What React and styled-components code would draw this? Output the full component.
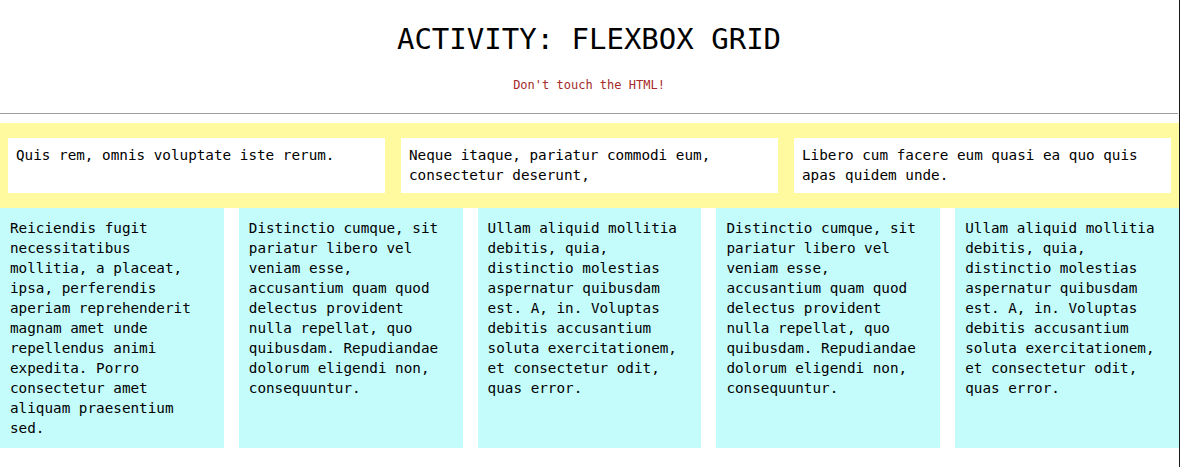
import styled, { createGlobalStyle } from "styled-components";

const GlobalStyle = createGlobalStyle`
  html, body {
    margin: 0;
    padding: 0;
    background: #fff;
  }
  body {
    font-family: "DejaVu Sans Mono", "Liberation Mono", monospace;
    color: #000;
  }
  * {
    box-sizing: border-box;
  }
`;

const Page = styled.div`
  min-height: 100vh;
  border-right: 1px solid #1a1a1a;
`;

const Header = styled.header`
  display: flex;
  flex-direction: column;
  align-items: center;
  padding-top: 22px;
  padding-bottom: 21px;
  border-bottom: 1px solid #9c9c9c;
  margin-right: 1px;
`;

const Title = styled.h1`
  margin: 0;
  font-size: 29px;
  line-height: 34px;
  font-weight: normal;
`;

const Note = styled.p`
  margin: 22px 0 0;
  font-size: 12px;
  line-height: 14px;
  color: #a52a2a;
`;

const TopRow = styled.section`
  display: flex;
  margin-top: 9px;
  padding: 7px 0;
  background: #fff99f;
`;

const Box = styled.div`
  flex: 1;
  margin: 8px;
  padding: 7px 8px 8px;
  background: #fff;
  font-size: 14.3px;
  line-height: 20px;
`;

const Columns = styled.section`
  display: flex;
  gap: 15px;
`;

const Column = styled.div`
  flex: 1;
  min-width: 0;
  padding: 10px;
  background: #c4fcfc;
  font-size: 14.3px;
  line-height: 20px;
`;

const boxes = [
  "Quis rem, omnis voluptate iste rerum.",
  "Neque itaque, pariatur commodi eum, consectetur deserunt,",
  "Libero cum facere eum quasi ea quo quis apas quidem unde.",
];

const distinctio =
  "Distinctio cumque, sit pariatur libero vel veniam esse, accusantium quam quod delectus provident nulla repellat, quo quibusdam. Repudiandae dolorum eligendi non, consequuntur.";
const ullam =
  "Ullam aliquid mollitia debitis, quia, distinctio molestias aspernatur quibusdam est. A, in. Voluptas debitis accusantium soluta exercitationem, et consectetur odit, quas error.";

const columns = [
  "Reiciendis fugit necessitatibus mollitia, a placeat, ipsa, perferendis aperiam reprehenderit magnam amet unde repellendus animi expedita. Porro consectetur amet aliquam praesentium sed.",
  distinctio,
  ullam,
  distinctio,
  ullam,
];

export default function App() {
  return (
    <>
      <GlobalStyle />
      <Page>
        <Header>
          <Title>ACTIVITY: FLEXBOX GRID</Title>
          <Note>Don't touch the HTML!</Note>
        </Header>
        <TopRow>
          {boxes.map((text, i) => (
            <Box key={i}>{text}</Box>
          ))}
        </TopRow>
        <Columns>
          {columns.map((text, i) => (
            <Column key={i}>{text}</Column>
          ))}
        </Columns>
      </Page>
    </>
  );
}
